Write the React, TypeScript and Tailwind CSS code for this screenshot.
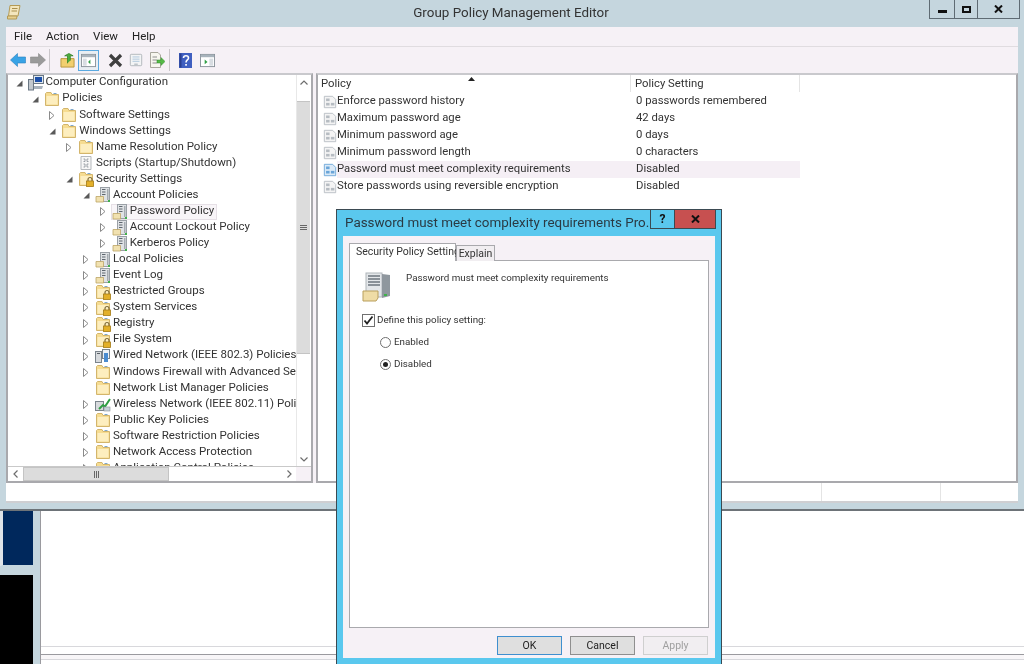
import type { ReactNode } from "react";

type TreeIcon = "computer" | "folder" | "lock" | "server" | "scripts" | "wired" | "wireless";
type TreeRow = {
  level: number;
  label: string;
  arrow?: "open" | "closed";
  icon: TreeIcon;
  selected?: boolean;
};

const TREE: TreeRow[] = [
  { level: 0, label: "Computer Configuration", arrow: "open", icon: "computer" },
  { level: 1, label: "Policies", arrow: "open", icon: "folder" },
  { level: 2, label: "Software Settings", arrow: "closed", icon: "folder" },
  { level: 2, label: "Windows Settings", arrow: "open", icon: "folder" },
  { level: 3, label: "Name Resolution Policy", arrow: "closed", icon: "folder" },
  { level: 3, label: "Scripts (Startup/Shutdown)", icon: "scripts" },
  { level: 3, label: "Security Settings", arrow: "open", icon: "lock" },
  { level: 4, label: "Account Policies", arrow: "open", icon: "server" },
  { level: 5, label: "Password Policy", arrow: "closed", icon: "server", selected: true },
  { level: 5, label: "Account Lockout Policy", arrow: "closed", icon: "server" },
  { level: 5, label: "Kerberos Policy", arrow: "closed", icon: "server" },
  { level: 4, label: "Local Policies", arrow: "closed", icon: "server" },
  { level: 4, label: "Event Log", arrow: "closed", icon: "server" },
  { level: 4, label: "Restricted Groups", arrow: "closed", icon: "lock" },
  { level: 4, label: "System Services", arrow: "closed", icon: "lock" },
  { level: 4, label: "Registry", arrow: "closed", icon: "lock" },
  { level: 4, label: "File System", arrow: "closed", icon: "lock" },
  { level: 4, label: "Wired Network (IEEE 802.3) Policies", arrow: "closed", icon: "wired" },
  { level: 4, label: "Windows Firewall with Advanced Security", arrow: "closed", icon: "folder" },
  { level: 4, label: "Network List Manager Policies", icon: "folder" },
  { level: 4, label: "Wireless Network (IEEE 802.11) Policies", arrow: "closed", icon: "wireless" },
  { level: 4, label: "Public Key Policies", arrow: "closed", icon: "folder" },
  { level: 4, label: "Software Restriction Policies", arrow: "closed", icon: "folder" },
  { level: 4, label: "Network Access Protection", arrow: "closed", icon: "folder" },
  { level: 4, label: "Application Control Policies", arrow: "closed", icon: "folder" },
];

const POLICIES = [
  ["Enforce password history", "0 passwords remembered"],
  ["Maximum password age", "42 days"],
  ["Minimum password age", "0 days"],
  ["Minimum password length", "0 characters"],
  ["Password must meet complexity requirements", "Disabled"],
  ["Store passwords using reversible encryption", "Disabled"],
];

function Svg({ size = 16, className, children }: { size?: number; className?: string; children: ReactNode }) {
  return (
    <svg width={size} height={size} viewBox="0 0 16 16" className={`shrink-0 ${className ?? ""}`}>
      {children}
    </svg>
  );
}

function FolderShape() {
  return (
    <>
      <path d="M1.5 4V14.5H14.5V3.5H8L7 1.5H2.5L1.5 2.5Z" fill="#f6dc91" stroke="#d3b56c" strokeWidth="1" />
      <path d="M2.5 5H13.5V13.5H2.5Z" fill="#fdeebf" />
      <rect x="9.5" y="2" width="3" height="1" fill="#7fa8cc" />
    </>
  );
}

function LockShape() {
  return (
    <>
      <path d="M10 10V8.5A2 2 0 0 1 14 8.5V10" fill="none" stroke="#7d6a3a" strokeWidth="1.2" />
      <rect x="8.5" y="10" width="7" height="5.5" fill="#e3b02a" stroke="#a47a14" strokeWidth="0.8" />
    </>
  );
}

function ServerShape() {
  return (
    <>
      <rect x="5.5" y="0.5" width="9" height="14" fill="#dfe2e5" stroke="#9aa0a6" />
      <path d="M7 2.5H10.5M7 5H10.5M7 7.5H10.5" stroke="#5e666e" />
      <rect x="12" y="2" width="1.5" height="11" fill="#a5abb1" />
      <path d="M1 9.5H8.5V15H1Z" fill="#f1e1b0" stroke="#bda565" strokeWidth="0.8" />
      <rect x="13" y="13" width="2" height="2" fill="#3fb24a" />
    </>
  );
}

function NodeIcon({ icon }: { icon: TreeIcon }) {
  if (icon === "folder") return <Svg><FolderShape /></Svg>;
  if (icon === "lock")
    return (
      <Svg>
        <FolderShape />
        <LockShape />
      </Svg>
    );
  if (icon === "server") return <Svg><ServerShape /></Svg>;
  if (icon === "scripts")
    return (
      <Svg>
        <path d="M3 1.5H13V14.5H3Z" fill="#f7f7f7" stroke="#b5b9bd" />
        <path d="M5.5 4H7V6.5H5.5M10.5 4H9V6.5H10.5M5.5 9H7V12H5.5M10.5 9H9V12H10.5" fill="none" stroke="#9aa0a6" />
      </Svg>
    );
  if (icon === "computer")
    return (
      <Svg>
        <rect x="5.5" y="0.5" width="10" height="8" fill="#dfe7ef" stroke="#6a7784" />
        <rect x="7" y="2" width="7" height="5" fill="#1c4fa8" />
        <rect x="0.5" y="4.5" width="5" height="10.5" fill="#c2c8ce" stroke="#6a7784" />
        <path d="M6 11H15L14 14H6Z" fill="#a8b2bc" />
      </Svg>
    );
  if (icon === "wired")
    return (
      <Svg>
        <rect x="0.5" y="3.5" width="6" height="11" fill="#d7dadd" stroke="#7b848c" />
        <rect x="7.5" y="1.5" width="7" height="9" fill="#eef2f6" stroke="#7b848c" />
        <rect x="9" y="5" width="4" height="9" fill="#4a8bcf" />
        <rect x="2" y="5" width="3" height="1" fill="#5a6067" />
      </Svg>
    );
  return (
    <Svg>
      <rect x="0.5" y="5.5" width="8" height="9" fill="#d7dadd" stroke="#7b848c" />
      <path d="M4 13L8 9L10 10.5L15 3" fill="none" stroke="#2f9e44" strokeWidth="2" />
      <rect x="9" y="11" width="6" height="4" fill="#c8d2da" stroke="#8a9097" strokeWidth="0.6" />
    </Svg>
  );
}

function Arrow({ kind }: { kind?: "open" | "closed" }) {
  return (
    <span className="w-[11px] shrink-0 flex items-center">
      {kind === "open" && (
        <svg width="7" height="7" viewBox="0 0 7 7">
          <path d="M6.5 0.5V6.5H0.5Z" fill="#595959" />
        </svg>
      )}
      {kind === "closed" && (
        <svg width="6" height="9" viewBox="0 0 6 9">
          <path d="M0.5 0.5L5 4.5L0.5 8.5Z" fill="#fff" stroke="#8a8a8a" />
        </svg>
      )}
    </span>
  );
}

function PolicyIcon({ active }: { active?: boolean }) {
  const c = active ? "#6aa5d8" : "#b6bcc2";
  return (
    <Svg size={14}>
      <path d="M1.5 1.5H11L14.5 5V14.5H1.5Z" fill={active ? "#dbeaf7" : "#f4f4f4"} stroke={c} />
      <rect x="3.5" y="4" width="4" height="3" fill={c} />
      <rect x="3.5" y="9" width="4" height="3" fill={c} />
      <rect x="9" y="9" width="4" height="3" fill={c} />
    </Svg>
  );
}

function ToolSep() {
  return <span className="block w-px h-[22px] bg-[#c9c5c9] shrink-0" />;
}

function Toolbar() {
  return (
    <div className="h-[27px] flex items-center bg-[#f6f1f6] border-t border-t-[#e0dce0] pl-[3px] shrink-0">
      <svg width="16" height="14" viewBox="0 0 16 14" className="ml-[1px]">
        <path d="M0.5 7L7.5 0.5V4H15.5V10H7.5V13.5Z" fill="#39a3e6" stroke="#2a7fc0" strokeWidth="0.6" />
      </svg>
      <svg width="16" height="14" viewBox="0 0 16 14" className="ml-[4px]">
        <path d="M15.5 7L8.5 0.5V4H0.5V10H8.5V13.5Z" fill="#9a9a9a" stroke="#8a8a8a" strokeWidth="0.6" />
      </svg>
      <span className="ml-[3px]"><ToolSep /></span>
      <Svg size={15} className="ml-[10px]">
        <path d="M1 6H15V15H1Z" fill="#f2cf6f" stroke="#b8963d" />
        <path d="M8 11V3H5L9.5 0.5L14 3H11V8" fill="#4caf3d" stroke="#2e7d25" strokeWidth="0.8" />
      </Svg>
      <span className="ml-[3px] w-[21px] h-[21px] border border-[#5aa9e0] bg-[#e9eef3] flex items-center justify-center">
        <Svg size={15}>
          <rect x="0.5" y="1.5" width="15" height="13" fill="#fff" stroke="#8a939b" />
          <rect x="1" y="2" width="14" height="2.5" fill="#a8b3bc" />
          <rect x="2" y="6" width="4" height="7.5" fill="#d8dde2" />
          <path d="M10 7L7.5 9.5L10 12Z" fill="#2f9e44" />
        </Svg>
      </span>
      <svg width="15" height="15" viewBox="0 0 15 15" className="ml-[9px]">
        <path d="M2 2L13 13M13 2L2 13" stroke="#3f3f3f" strokeWidth="3.2" />
      </svg>
      <Svg size={14} className="ml-[6px]">
        <rect x="1.5" y="1.5" width="13" height="13" rx="1" fill="#f3f4f5" stroke="#adb2b7" />
        <path d="M4 4.5H12M4 7H12M4 9.5H12" stroke="#a9c3da" />
        <rect x="6" y="12" width="4" height="2" fill="#bfc4c9" />
      </Svg>
      <Svg size={16} className="ml-[6px]">
        <path d="M1.5 0.5H9L11.5 3V15.5H1.5Z" fill="#f7f6ef" stroke="#a8a79c" />
        <path d="M3.5 5H8M3.5 8H8M3.5 11H8" stroke="#8d8d8d" />
        <path d="M8 8H12V5.5L16 9.5L12 13.5V11H8Z" fill="#56b947" stroke="#2e8a25" strokeWidth="0.5" />
      </Svg>
      <span className="ml-[4px]"><ToolSep /></span>
      <svg width="13" height="15" viewBox="0 0 13 15" className="ml-[9px]">
        <rect width="13" height="15" fill="#3f5fc0" />
        <rect x="0.5" y="0.5" width="2" height="14" fill="#2a3f8f" />
        <path d="M4.5 5C4.5 2 9.5 2 9.5 5C9.5 7 7 7 7 9.5" fill="none" stroke="#fff" strokeWidth="1.6" />
        <rect x="6.2" y="11" width="1.7" height="1.7" fill="#fff" />
      </svg>
      <Svg size={15} className="ml-[8px]">
        <rect x="0.5" y="1.5" width="15" height="13" fill="#fff" stroke="#8a939b" />
        <rect x="1" y="2" width="14" height="2.5" fill="#a8b3bc" />
        <path d="M5 7L8 9.5L5 12Z" fill="#2f9e44" />
        <rect x="10" y="6" width="4" height="7.5" fill="#d8dde2" />
      </Svg>
    </div>
  );
}

function ScrollBtn({ dir, className }: { dir: "up" | "down" | "left" | "right"; className: string }) {
  const d = {
    up: "M1.5 6.5L5 3L8.5 6.5",
    down: "M1.5 3.5L5 7L8.5 3.5",
    left: "M6.5 1.5L3 5L6.5 8.5",
    right: "M3.5 1.5L7 5L3.5 8.5",
  }[dir];
  return (
    <div className={`flex items-center justify-center shrink-0 bg-white ${className}`}>
      <svg width="10" height="10" viewBox="0 0 10 10">
        <path d={d} fill="none" stroke="#6d6d6d" strokeWidth="1.2" />
      </svg>
    </div>
  );
}

function TreePane() {
  return (
    <div className="w-[307px] shrink-0 h-full border-2 border-[#a9a9ad] border-t-[#c9c9cd] bg-white flex flex-col">
      <div className="flex-1 min-h-0 flex">
        <div className="flex-1 min-w-0 overflow-hidden">
          {TREE.map((r) => (
            <div
              key={r.label}
              className="h-[16.07px] flex items-center whitespace-nowrap text-[11.5px] text-[#333]"
              style={{ paddingLeft: 7.5 + r.level * 16.85 }}
            >
              <Arrow kind={r.arrow} />
              <span
                className={`flex items-center h-[16px] border ${
                  r.selected ? "border-[#e6e0e6] bg-[#f8f5f8] pr-[2px]" : "border-transparent"
                }`}
              >
                <NodeIcon icon={r.icon} />
                <span className="ml-[2px] pb-[2px]">{r.label}</span>
              </span>
            </div>
          ))}
        </div>
        <div className="w-[14px] shrink-0 flex flex-col border-l border-l-[#e8e8e8] mr-px">
          <ScrollBtn dir="up" className="h-[15px]" />
          <div className="h-[11px] bg-white" />
          <div className="h-[253px] bg-[#dcdcdc] flex items-center justify-center flex-col gap-[1px] border-y border-[#c4c4c4]">
            <span className="w-[7px] h-px bg-[#666]" />
            <span className="w-[7px] h-px bg-[#666]" />
            <span className="w-[7px] h-px bg-[#666]" />
          </div>
          <div className="flex-1 bg-white" />
          <ScrollBtn dir="down" className="h-[14px]" />
        </div>
      </div>
      <div className="h-[15px] shrink-0 flex border-t border-t-[#c9c9c9]">
        <ScrollBtn dir="left" className="w-[15px]" />
        <div className="w-[146px] bg-[#dcdcdc] border border-[#c4c4c4] flex items-center justify-center gap-[1px]">
          <span className="w-px h-[7px] bg-[#666]" />
          <span className="w-px h-[7px] bg-[#666]" />
          <span className="w-px h-[7px] bg-[#666]" />
        </div>
        <div className="flex-1 bg-white" />
        <ScrollBtn dir="right" className="w-[14px]" />
        <div className="w-[15px] bg-[#f6f1f6]" />
      </div>
    </div>
  );
}

function PolicyPane() {
  return (
    <div className="flex-1 min-w-0 h-full border-2 border-[#a9a9ad] border-t-[#c9c9cd] bg-white">
      <div className="h-[17px] flex text-[11.3px] text-[#333] relative">
        <div className="w-[313px] pl-[3px] border-r border-r-[#e4e4e4] leading-[17px]">Policy</div>
        <div className="w-[169px] pl-[4px] border-r border-r-[#e4e4e4] leading-[17px]">Policy Setting</div>
        <svg width="7" height="4" viewBox="0 0 7 4" className="absolute left-[150px] top-[2px]">
          <path d="M0 4L3.5 0L7 4Z" fill="#222" />
        </svg>
      </div>
      <div className="w-[482px] mt-px">
        {POLICIES.map(([name, value], i) => (
          <div key={name} className="h-[17px] flex items-center text-[11.3px] text-[#333] whitespace-nowrap">
            <div className="w-[313px] flex items-center pl-[5px] h-full">
              <PolicyIcon active={i === 4} />
              <span className={`flex-1 h-full leading-[16px] ${i === 4 ? "bg-[#f5eff5]" : ""}`}>{name}</span>
            </div>
            <div className={`flex-1 pl-[5px] h-full leading-[16px] ${i === 4 ? "bg-[#f5eff5]" : ""}`}>{value}</div>
          </div>
        ))}
      </div>
    </div>
  );
}

function CaptionButtons() {
  return (
    <div className="absolute right-[4px] top-0 h-[19px] flex border border-t-0 border-[#5f6b73] bg-[#c5d6de]">
      <div className="w-[25px] flex items-center justify-center border-r border-r-[#5f6b73] pt-[5px]">
        <span className="w-[9px] h-[3px] bg-[#111]" />
      </div>
      <div className="w-[23px] flex items-center justify-center border-r border-r-[#5f6b73]">
        <span className="w-[9px] h-[7px] border-2 border-[#111]" />
      </div>
      <div className="w-[41px] flex items-center justify-center">
        <svg width="9" height="8" viewBox="0 0 9 8">
          <path d="M1 0.5L8 7.5M8 0.5L1 7.5" stroke="#111" strokeWidth="2" />
        </svg>
      </div>
    </div>
  );
}

function Window() {
  return (
    <div className="relative h-[511px] shrink-0 bg-[#c5d6de] border-b-2 border-b-[#6d7378] flex flex-col">
      <div className="h-[27px] shrink-0 flex items-center justify-center relative text-[13.4px] text-[#333]">
        <svg width="14" height="15" viewBox="0 0 14 15" className="absolute left-[7px] top-[5px]">
          <path d="M3 0.5H13L11 11H1.5Z" fill="#f3e6bd" stroke="#b49a55" />
          <path d="M5 3.5H10.5M4.5 6H10" stroke="#a98f4d" />
          <path d="M0.5 11H10L9.5 14H0.5Z" fill="#e6cf8e" stroke="#b49a55" />
        </svg>
        <span className="pr-[2px]">Group Policy Management Editor</span>
        <CaptionButtons />
      </div>
      <div className="mx-[6px] flex-1 min-h-0 flex flex-col">
        <div className="h-[19px] shrink-0 bg-[#f6f1f6] flex items-center pl-[8px] gap-[14px] text-[11.5px] text-[#222]">
          <span>File</span>
          <span>Action</span>
          <span>View</span>
          <span>Help</span>
        </div>
        <Toolbar />
        <div className="h-[410px] shrink-0 flex gap-[3px] bg-[#f6f1f6]">
          <TreePane />
          <PolicyPane />
        </div>
        <div className="h-[20px] shrink-0 bg-white border-b-2 border-b-[#cfcfd2] flex justify-end">
          <div className="w-[119px] border-l border-l-[#e4e4e4]" />
          <div className="w-[119px] border-l border-l-[#e4e4e4]" />
          <div className="w-[78px] border-l border-l-[#e4e4e4]" />
        </div>
      </div>
    </div>
  );
}

function BehindWindow() {
  return (
    <div className="flex-1 min-h-0 flex">
      <div className="w-[33px] shrink-0 flex flex-col">
        <div className="h-[55px] bg-[#00285c] border-l-[3px] border-b border-[#c5d6de] border-l-[#dfe4e8]" />
        <div className="h-[9px] bg-[#c5d6de]" />
        <div className="flex-1 bg-black" />
      </div>
      <div className="w-[7px] shrink-0 bg-[#c5d6de]" />
      <div className="flex-1 bg-white border-l border-l-[#9a9a9f] flex flex-col">
        <div className="h-[135px] shrink-0" />
        <div className="h-[9px] shrink-0 border-t border-t-[#d8d8dc] border-b border-b-[#9a9a9f]" />
        <div className="h-[5px] shrink-0 border-b border-b-[#d8d8dc] bg-[#f8f6f8]" />
      </div>
    </div>
  );
}

function DlgButton({ label, variant }: { label: string; variant: "default" | "normal" | "disabled" }) {
  const cls = {
    default: "bg-[#dfdfdf] border-[#3f8fcf] text-[#222]",
    normal: "bg-[#dfdfdf] border-[#8f8f8f] text-[#222]",
    disabled: "bg-[#f1eef1] border-[#cfcfcf] text-[#a0a0a0]",
  }[variant];
  return (
    <div className={`w-[65px] h-[19px] border flex items-center justify-center text-[10.5px] ${cls}`}>{label}</div>
  );
}

function PolicyDialog() {
  return (
    <div className="absolute left-[336px] top-[209px] w-[386px] h-[460px] bg-[#5ac8ee] border border-[#3b4a52] flex flex-col text-[#333]">
      <div className="h-[26px] shrink-0 relative">
        <span className="absolute left-[8px] top-[3px] text-[13.4px] whitespace-nowrap leading-[20px] text-[#2a3a44]">
          Password must meet complexity requirements Pro...
        </span>
        <div className="absolute right-[5px] top-0 h-[19px] flex">
          <div className="w-[25px] bg-[#5ac8ee] border border-t-0 border-[#3b4a52] flex items-center justify-center text-[12px] font-bold text-[#111] leading-none">
            ?
          </div>
          <div className="w-[41px] bg-[#c75050] border-b border-r border-[#3b4a52] flex items-center justify-center">
            <svg width="9" height="8" viewBox="0 0 9 8">
              <path d="M1 0.5L8 7.5M8 0.5L1 7.5" stroke="#111" strokeWidth="2" />
            </svg>
          </div>
        </div>
      </div>
      <div className="mx-[6px] h-[422px] shrink-0 bg-[#f6f1f6] pt-[7px] px-[6px] flex flex-col">
        <div className="h-[18px] flex items-end text-[10.5px] relative z-10">
          <div className="w-[107px] h-[18px] bg-white border border-b-0 border-[#a9a9ad] pl-[6px] leading-[15px] whitespace-nowrap">
            Security Policy Setting
          </div>
          <div className="w-[39px] h-[16px] bg-[#f1eef1] border border-[#a9a9ad] border-b-0 text-center leading-[16px]">
            Explain
          </div>
        </div>
        <div className="h-[368px] shrink-0 -mt-px bg-white border border-[#a9a9ad] pl-[12px] pt-[11px] text-[9.8px]">
          <div className="flex items-start">
            <svg width="30" height="30" viewBox="0 0 30 30" className="shrink-0">
              <rect x="4" y="1" width="16" height="24" fill="#e3e6e9" stroke="#b0b5ba" />
              <path d="M6 4H18M6 7H18M6 10H18M6 13H18" stroke="#6e767e" strokeWidth="1.4" />
              <path d="M20 2L28 3V24L20 26Z" fill="#8f979e" />
              <path d="M1 19H16V26L14 29H1Z" fill="#efdca6" stroke="#b99f5c" />
              <rect x="22" y="22" width="3" height="2" fill="#3fb24a" />
            </svg>
            <span className="ml-[14px] mt-[-1px] leading-[14px] whitespace-nowrap">Password must meet complexity requirements</span>
          </div>
          <div className="flex items-center mt-[11px] h-[14px]">
            <span className="w-[13px] h-[13px] border border-[#707070] bg-white flex items-center justify-center shrink-0">
              <svg width="11" height="11" viewBox="0 0 11 11">
                <path d="M1.5 5.5L4 8.5L9.5 1.5" fill="none" stroke="#222" strokeWidth="1.8" />
              </svg>
            </span>
            <span className="ml-[2px] whitespace-nowrap">Define this policy setting:</span>
          </div>
          <div className="flex items-center ml-[18px] mt-[8px] h-[14px]">
            <span className="w-[11px] h-[11px] rounded-full border border-[#707070] bg-white shrink-0" />
            <span className="ml-[3px]">Enabled</span>
          </div>
          <div className="flex items-center ml-[18px] mt-[8px] h-[14px]">
            <span className="w-[11px] h-[11px] rounded-full border border-[#707070] bg-white shrink-0 flex items-center justify-center">
              <span className="w-[5px] h-[5px] rounded-full bg-[#222]" />
            </span>
            <span className="ml-[3px]">Disabled</span>
          </div>
        </div>
        <div className="flex justify-end gap-[8px] mt-[8px] pr-[1px]">
          <DlgButton label="OK" variant="default" />
          <DlgButton label="Cancel" variant="normal" />
          <DlgButton label="Apply" variant="disabled" />
        </div>
      </div>
    </div>
  );
}

export default function App() {
  return (
    <div className="relative w-[1024px] h-[664px] overflow-hidden flex flex-col bg-white font-['Roboto',sans-serif] blur-[0.3px]">
      <Window />
      <BehindWindow />
      <PolicyDialog />
    </div>
  );
}
